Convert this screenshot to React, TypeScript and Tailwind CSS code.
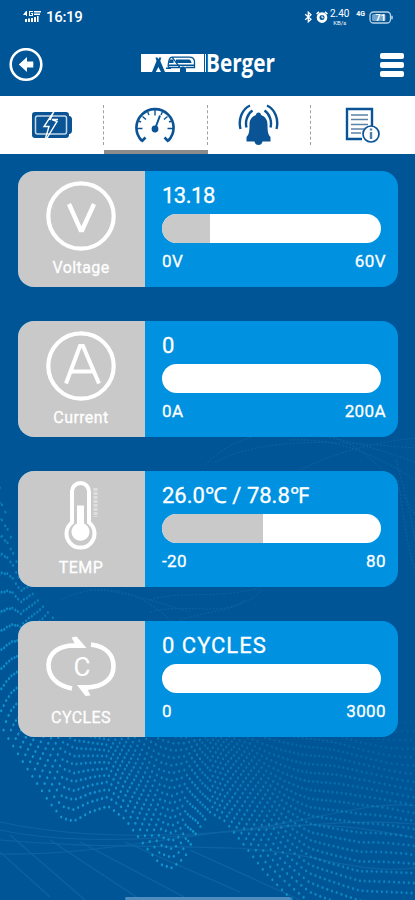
import React from 'react';

type Point = [number, number];

// outline of the dotted wave: bottom edge and the faded top edge
const waveEdge: Point[] = [
  [-10, 700], [5, 733], [25, 765], [50, 803], [62, 818], [74, 821], [90, 812], [108, 806], [125, 819],
  [145, 846], [160, 864], [172, 868], [185, 857], [196, 833], [210, 812], [225, 821], [245, 846],
  [265, 872], [285, 893], [310, 915], [360, 935], [425, 940],
];
const waveTop: Point[] = [
  [-10, 465], [0, 490], [20, 575], [50, 610], [90, 650], [150, 685], [200, 706], [250, 700], [300, 712], [425, 722],
];

const valueAt = (points: Point[], x: number) => {
  const i = Math.max(1, points.findIndex((p) => p[0] >= x));
  const [x0, y0] = points[i - 1];
  const [x1, y1] = points[i];
  const t = (x - x0) / (x1 - x0);
  return y0 + (y1 - y0) * t;
};

const ROWS = 25;
const dots: { x: number; y: number; o: number }[] = [];
for (let r = 0; r < ROWS; r++) {
  const s = r / (ROWS - 1);
  const t = Math.pow(s, 0.88);
  for (let c = 0; c < 92; c++) {
    const x = c * 4.8 - 6 + s * 6 * Math.sin(c / 7) + (r % 2) * 2.4;
    if (x < -9 || x > 420) continue;
    const bottom = valueAt(waveEdge, x);
    const top = valueAt(waveTop, x);
    const y = bottom + (top - bottom) * t + Math.sin(x / 26 + r / 4) * 5 * t;
    const fade = x < 60 ? 0.35 : 0.65;
    dots.push({ x, y, o: 0.88 - s * fade - (x > 200 ? 0.14 : 0) });
  }
}

const Backdrop: React.FC = () => (
  <svg className="absolute inset-0" width="415" height="900" viewBox="0 0 415 900" fill="none">
    <g stroke="#2b86bf" strokeWidth="1.2" opacity="0.3">
      <path d="M0 822C60 835 130 838 210 833S350 818 415 824" />
      <path d="M0 830C70 845 160 840 240 830S370 800 415 806" />
      <path d="M0 840C90 848 140 845 230 848S350 875 415 868" />
      <path d="M0 854C60 855 110 848 200 835S330 820 415 838" />
      <path d="M0 852L50 897M10 835L85 900M50 840L138 898M80 842L190 900M125 842L240 892M190 850L300 900" />
    </g>
    <g stroke="#2b86bf" strokeWidth="1" opacity="0.3" strokeDasharray="2 1.5">
      <path d="M205 465C250 420 310 425 415 462" />
      <path d="M215 462C270 435 340 442 415 448" />
      <path d="M300 470C340 450 380 442 415 438" />
      <path d="M290 440C330 438 370 450 415 480" />
      <path d="M330 436C360 445 390 470 415 515" />
      <path d="M398 480C404 520 408 550 415 570M396 460C404 490 410 510 415 540" />
      <path d="M150 600C180 590 220 600 262 587M150 612C190 602 220 618 245 600M180 620C210 610 240 612 262 590" />
      <path d="M60 600C100 580 140 590 170 620M90 590C120 590 150 600 190 612" />
    </g>
    {dots.map((d, i) => (
      <ellipse key={i} cx={d.x} cy={d.y} rx="1.1" ry="1.5" fill="#12a0dc" opacity={d.o} />
    ))}
  </svg>
);

const StatusBar = () => (
  <div className="flex h-[34px] items-center justify-between pl-[23px] pr-[22px] text-white">
    <div className="flex items-center gap-[5px]">
      <svg width="18" height="12" viewBox="0 0 18 12" fill="white">
        <path d="M3 0L0 4h3v1h1V0zM6 0h4v1H7v3h2V3H8V2h2v3H6zM11 0h7v1.4h-7zM11 2.6h6V4h-6z" />
        <path d="M2 8h2v3H2zM5 7.5h2V11H5zM8 7h2v4H8zM11 6h2v5h-2zM14 5h1.6v6H14z" />
      </svg>
      <span className="mt-[1px] text-[15px] leading-none font-medium tracking-[-0.3px]">16:19</span>
    </div>
    <div className="flex items-center">
      <svg width="9" height="12" viewBox="0 0 9 12" fill="none" stroke="white" strokeWidth="1.3">
        <path d="M1.2 3.2L7 8.3 4.3 10.8V1.2L7 3.7 1.2 8.8" />
      </svg>
      <svg className="ml-[3px]" width="12" height="12" viewBox="0 0 12 12" fill="none">
        <circle cx="6" cy="6.6" r="3.9" stroke="white" strokeWidth="2.8" />
        <path d="M.6 3L3 .8M11.4 3L9 .8" stroke="white" strokeWidth="1.6" />
        <path d="M6 4.6v2.2h1.6" stroke="white" strokeWidth="1" />
      </svg>
      <div className="ml-[1px] flex w-[21px] flex-col items-center">
        <span className="text-[10px] leading-[11px]">2.40</span>
        <span className="text-[6px] leading-[7px]">KB/s</span>
      </div>
      <span className="mt-[-5px] ml-[6px] text-[7px] leading-none font-bold">4G</span>
      <svg className="ml-[4px]" width="24" height="13" viewBox="0 0 24 13" fill="none">
        <rect x="1" y="1" width="20.5" height="11" rx="3.5" stroke="#b9d3e8" strokeWidth="1.3" />
        <rect x="3" y="3" width="13.5" height="7" rx="1.5" fill="#6fa3cc" />
        <path d="M23 4.8v3.4" stroke="#b9d3e8" strokeWidth="1.5" />
        <text x="6.5" y="9.7" fill="white" fontSize="9" fontWeight="700">71</text>
      </svg>
    </div>
  </div>
);

const Header = () => (
  <header className="flex h-[62px] items-center pr-[11px] pl-[9px]">
    <svg width="34" height="34" viewBox="0 0 34 34" fill="none">
      <circle cx="17" cy="16.5" r="15.3" stroke="white" strokeWidth="2.6" />
      <path d="M9.8 16.5L18 9v4.600h6.300v6H18V24z" fill="white" />
    </svg>
    <div className="mt-[-4px] ml-[98px] flex items-center gap-[1px]">
      <svg width="63" height="18" viewBox="0 0 63 18" fill="none">
        <path d="M0 0h63v18H0z" fill="white" />
        <path d="M11 18l4.500-11-1-3.500h2l.9 1.800.9-1.800h2l-1 3.500L24 18h-4l-2.600-5-2.600 5z" fill="#005596" />
        <path d="M31 3.200h17q5.500 0 5.500 4.500v5.800h-9M39 13.500H28.500q-1.500 0-1.300-2.500C27.500 7 28 3.200 31 3.200z" stroke="#005596" strokeWidth="1.300" />
        <path d="M28.500 5.500h4V9h-4.500zM35 5.500h13q2 0 2.500 3.500H35zM27.500 10.500h26v1.500h-26z" fill="#005596" />
        <path d="M39 15.500a3 3 0 0 1 6 0V18h-6zM25 13.500h5V15h-5z" fill="#005596" />
      </svg>
      <svg className="overflow-visible" width="72" height="42" viewBox="0 0 72 42">
        <path d="M0 12h1v18H0z" fill="white" />
        <text x="1" y="29.500" fill="white" fontFamily="Open Sans, Noto Sans, sans-serif" fontSize="24.500" fontWeight="700" textLength="69" lengthAdjust="spacingAndGlyphs">Berger</text>
      </svg>
    </div>
    <div className="ml-auto flex w-6 flex-col gap-[3.5px]">
      <span className="h-[5.5px] rounded-[2px] bg-white" />
      <span className="h-[5.5px] rounded-[2px] bg-white" />
      <span className="h-[5.5px] rounded-[2px] bg-white" />
    </div>
  </header>
);

const BatteryIcon = () => (
  <svg className="mb-[1px]" width="42" height="28" viewBox="0 0 42 28" fill="none">
    <rect x="1" y="1" width="37" height="26" rx="3" fill="#0a5496" />
    <path d="M37 5h2q2 1 2 3v12q0 2-2 3h-2z" fill="#0a5496" />
    <rect x="4.500" y="5" width="31" height="18" rx="2" stroke="#c3d6e6" strokeWidth="1.500" />
    <path d="M24 -1L13 15.500h5L14 29M27 8.500h-6L26 10.500 16 27M23 0l-4 9" stroke="white" strokeWidth="1.400" />
  </svg>
);

const GaugeIcon = () => (
  <svg className="mr-[1px]" width="42" height="36" viewBox="0 0 42 36" fill="none" stroke="#0a5496">
    <path d="M8 34A18.600 18.600 0 1 1 34 34" strokeWidth="2.600" />
    <path d="M7.500 34.500l4-4M34.500 34.500l-4-4" strokeWidth="2.600" />
    <path d="M3 21.500h5.500M33.500 21.500H39M8.500 9.500l3.500 3M33.500 9.500l-3.500 3M21 3v5.500M13.700 5l1.300 3M28.300 5L27 8M4.500 14l2.500 1M37.500 14L35 15" strokeWidth="1.400" />
    <path d="M21 22l5-13.500" strokeWidth="2" />
    <circle cx="21" cy="22" r="3.400" fill="#0a5496" stroke="none" />
  </svg>
);

const BellIcon = () => (
  <svg width="42" height="42" viewBox="0 0 42 42" fill="none" stroke="#0a5496" strokeWidth="2.400">
    <path d="M20.500 8.500c1.500 0 2.500 1 2.500 2.500 4.500 1.500 6.500 5 6.500 9.500 0 7 .5 10 3 12.500v4.500h-8c-.5 2.500-2 3.500-4 3.500s-3.500-1-4-3.500h-8V33c2.500-2.500 3-5.500 3-12.500 0-4.500 2-8 6.500-9.500 0-1.500 1-2.500 2.500-2.500z" fill="#0a5496" stroke="none" />
    <path d="M8.500 23.500C7 17.500 9 10 14.500 6.500M2.500 25C0 15.500 4 5 12 1.500M32.500 23.500C34 17.500 32 10 26.500 6.500M38.500 25C41 15.500 37 5 29 1.500" />
  </svg>
);

const ReportIcon = () => (
  <svg className="mr-[1px]" width="36" height="37" viewBox="0 0 36 37" fill="none" stroke="#0a5496">
    <path d="M17 32H2V2h25v17" strokeWidth="2.400" />
    <path d="M6 8h17M6 12.500h17M6 17.500h17M6 22h13M6 26h10" stroke="#5b83a6" strokeWidth="1.500" />
    <circle cx="26" cy="27" r="8" fill="white" strokeWidth="1.700" />
    <path d="M26 21.500v2M26 25v7" stroke="#4f7fa8" strokeWidth="2.400" />
  </svg>
);

const tabs = [BatteryIcon, GaugeIcon, BellIcon, ReportIcon];

const VoltageIcon = () => (
  <svg width="70" height="70" viewBox="0 0 70 70" fill="none" stroke="white">
    <circle cx="35" cy="35" r="32.7" strokeWidth="4.2" />
    <path d="M23 23L34.600 49h1.600L48 23" strokeWidth="4.400" />
  </svg>
);

const CurrentIcon = () => (
  <svg width="70" height="70" viewBox="0 0 70 70" fill="none" stroke="white">
    <circle cx="35" cy="35" r="32.7" strokeWidth="4.2" />
    <path d="M20 52.500L34 15h3L53 52.500M25.500 40.500h21.500" strokeWidth="4" />
  </svg>
);

const TempIcon = () => (
  <svg width="70" height="70" viewBox="0 0 70 70" fill="none">
    <path d="M26 41.500V10.500a8.500 8.500 0 0 1 17 0V41.500a14 14 0 1 1-17 0z" stroke="white" strokeWidth="4" />
    <path d="M31 24.500h7v18a9 9 0 1 1-7 0z" fill="white" />
    <path d="M49.500 7v29" stroke="#dedede" strokeWidth="4" strokeDasharray="3 1" />
  </svg>
);

const CyclesIcon = () => (
  <svg width="70" height="70" viewBox="0 0 70 70" fill="none" stroke="white">
    <path d="M30 14.500C12 14 2.500 23 2.500 34S10 54.500 26 57.500M45 13.500C60 15.500 67.500 24 67.500 35.500S58 56.500 40 56.500" strokeWidth="4.600" />
    <path d="M25.500 6.500l5-1 10 11.500H25l4-4zM44.500 64.500l-5 .5-8.500-11h14l-3 5.500z" fill="white" stroke="none" />
    <text x="36" y="45" textAnchor="middle" fontFamily="Roboto, sans-serif" fontSize="26" fill="white" stroke="none">C</text>
  </svg>
);

interface Metric {
  label: string;
  icon: React.FC;
  value: string;
  spacing: string;
  fill: number;
  min: string;
  max: string;
}

const metrics: Metric[] = [
  { label: 'Voltage', icon: VoltageIcon, value: '13.18', spacing: 'tracking-[-0.5px]', fill: 22, min: '0V', max: '60V' },
  { label: 'Current', icon: CurrentIcon, value: '0', spacing: 'tracking-normal', fill: 0, min: '0A', max: '200A' },
  { label: 'TEMP', icon: TempIcon, value: '26.0℃ / 78.8℉', spacing: 'tracking-normal', fill: 46, min: '-20', max: '80' },
  { label: 'CYCLES', icon: CyclesIcon, value: '0 CYCLES', spacing: 'tracking-[1px]', fill: 0, min: '0', max: '3000' },
];

const MetricCard: React.FC<{ metric: Metric }> = ({ metric }) => {
  const Icon = metric.icon;
  return (
    <div className="flex h-[116px] overflow-hidden rounded-[16px] bg-[#0091e0] text-white [-webkit-text-stroke:0.3px_white]">
      <div className="flex w-[127px] flex-col items-center bg-[#c9c9c9] pt-[10px] pr-[1px]">
        <Icon />
        <span className="mt-[7px] text-[16px] leading-[20px] tracking-[0.4px]">{metric.label}</span>
      </div>
      <div className="flex-1 pt-[12px] pr-[12px] pl-[17px]">
        <div className={`h-[26px] text-[22px] leading-[26px] whitespace-nowrap ${metric.spacing}`}>{metric.value}</div>
        <div className="mt-[5px] h-[29px] w-[219px] overflow-hidden rounded-full bg-white">
          <div className="h-full bg-[#c9c9c9]" style={{ width: `${metric.fill}%` }} />
        </div>
        <div className="mt-[8px] flex justify-between text-[17px] leading-[20px] tracking-[0.4px]">
          <span>{metric.min}</span>
          <span>{metric.max}</span>
        </div>
      </div>
    </div>
  );
};

const App: React.FC = () => (
  <div className="relative h-[900px] w-[415px] overflow-hidden bg-[#005596] font-[Roboto,sans-serif]">
    <Backdrop />
    <div className="relative flex h-full flex-col">
      <StatusBar />
      <Header />
      <nav className="grid h-[58px] grid-cols-4 bg-white">
        {tabs.map((Tab, i) => (
          <div key={i} className="relative flex items-center justify-center">
            <Tab />
            {i < 3 && <span className="absolute top-[9px] right-0 h-[40px] border-r border-dashed border-[#a0a0a0]" />}
            {i === 1 && <span className="absolute inset-x-0 bottom-0 h-[4px] bg-[#8c8c8c]" />}
          </div>
        ))}
      </nav>
      <main className="flex flex-col gap-[34px] pt-[17px] pr-[17px] pl-[18px]">
        {metrics.map((m) => (
          <MetricCard key={m.label} metric={m} />
        ))}
      </main>
      <div className="mt-auto ml-[125px] h-[3px] w-[166px] rounded-full bg-[#4f8dbf]" />
    </div>
  </div>
);

export default App;
